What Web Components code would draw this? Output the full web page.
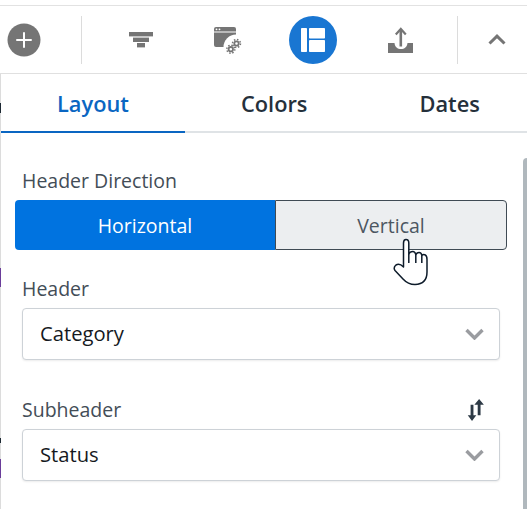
<!DOCTYPE html>
<html>
<head>
<meta charset="utf-8">
<style>
	html, body { margin: 0; padding: 0; background: #fff; }
	body { width: 527px; height: 509px; overflow: hidden; font-family: "Open Sans", "Noto Sans", sans-serif; position: relative; }
</style>
</head>
<body>
<tool-bar>
	<tool-icon width="82" offset="-17" divider>
		<svg width="34" height="34" viewBox="0 0 34 34"><circle cx="17" cy="17" r="16.5" fill="#757575"/><path d="M17 10v14M10 17h14" stroke="#fff" stroke-width="2" stroke-linecap="round"/></svg>
	</tool-icon>
	<tool-icon width="117" offset="0">
		<svg width="24" height="16" viewBox="0 0 24 16" fill="#757575"><rect width="24" height="4.4"/><rect x="4" y="5.6" width="16" height="4.4"/><rect x="8" y="11" width="8" height="4.4"/></svg>
	</tool-icon>
	<tool-icon width="66" offset="-3">
		<svg width="30" height="30" viewBox="214 26 30 30">
			<path d="M216 28h18a2 2 0 0 1 2 2v18h-20a2 2 0 0 1-2-2V30a2 2 0 0 1 2-2z" fill="#757575"/>
			<rect x="214" y="32.5" width="22" height="1" fill="#fff"/>
			<circle cx="216.5" cy="30.3" r=".9" fill="#fff"/><circle cx="219.5" cy="30.3" r=".9" fill="#fff"/>
			<circle cx="236" cy="48" r="12.5" fill="#fff"/>
			<g fill="none" stroke="#757575">
				<circle cx="236.5" cy="44.5" r="2.2" stroke-width="1.800"/>
				<circle cx="236.500" cy="44.500" r="4" stroke-width="1.500" stroke-dasharray="1.500 1.640"/>
				<circle cx="230.800" cy="50.200" r="2.200" stroke-width="1.800"/>
				<circle cx="230.800" cy="50.200" r="4" stroke-width="1.500" stroke-dasharray="1.500 1.640"/>
			</g>
		</svg>
	</tool-icon>
	<tool-icon width="96" offset="0">
		<svg width="48" height="48" viewBox="0 0 48 48"><circle cx="24" cy="24" r="24" fill="#1976d2"/><g fill="#fff"><rect x="12" y="12" width="6" height="24" rx=".8"/><rect x="20" y="12" width="16" height="10.5" rx=".8"/><rect x="20" y="24" width="16" height="12" rx=".8"/></g></svg>
	</tool-icon>
	<tool-icon width="97" offset="-9" divider>
		<svg width="26" height="26" viewBox="0 0 26 26">
			<path d="M0 16h6.500c.5 4 3 6 6.500 6s6-2 6.500-6H25v10H0z" fill="#757575"/>
			<path d="M12.800 19.500V3" stroke="#757575" stroke-width="2.600" fill="none"/>
			<path d="M7.800 7.500 12.800 2l5 5.500" stroke="#757575" stroke-width="2.200" fill="none"/>
		</svg>
	</tool-icon>
	<tool-icon width="69" offset="4">
		<svg width="18" height="11" viewBox="0 0 18 11"><path d="M1.500 9.500 9 2.200l7.500 7.300" stroke="#757575" stroke-width="3" fill="none"/></svg>
	</tool-icon>
</tool-bar>
<config-panel>
	<tab-bar active="0">
		<span>Layout</span>
		<span>Colors</span>
		<span>Dates</span>
	</tab-bar>
	<field-label style="margin-top:36px">Header Direction</field-label>
	<segment-toggle first="Horizontal" second="Vertical"></segment-toggle>
	<field-label style="margin-top:27px">Header</field-label>
	<select-box>Category</select-box>
	<field-label style="margin-top:38px">Subheader
		<svg slot="action" width="18" height="24" viewBox="466 397 19 25" fill="#2d3a46"><path d="M469.800 404h3v11h3l-4.500 6-4.500-6h3z"/><path d="M477.300 415h3v-11h3.500l-5-6-5 6h3.500z"/></svg>
	</field-label>
	<select-box>Status</select-box>
</config-panel>
<hand-cursor></hand-cursor>
<script>
class ToolBar extends HTMLElement {
	constructor() {
		super();
		this.attachShadow({ mode: "open" });
		this.shadowRoot.innerHTML = `
		<style>
			:host {
				display: flex;
				box-sizing: border-box;
				height: 69px;
				margin-top: 5px;
				border-top: 1px solid #e2e2e2;
				border-bottom: 1px solid #e0e0e0;
				background: #fff;
				align-items: stretch;
			}
		</style>
		<slot></slot>
		`;
	}
}

class ToolIcon extends HTMLElement {
	constructor() {
		super();
		this.attachShadow({ mode: "open" });
		this.shadowRoot.innerHTML = `
		<style>
			:host {
				display: flex;
				box-sizing: border-box;
				align-items: center;
				justify-content: center;
				position: relative;
			}
			.divider {
				position: absolute;
				right: 0;
				top: 10px;
				bottom: 9px;
				width: 1px;
				background: #dcdcdc;
			}
			.icon { display: flex; }
		</style>
		<div class="icon"><slot></slot></div>
		<div class="divider"></div>
		`;
	}

	connectedCallback() {
		this.style.width = `${this.getAttribute("width")}px`;
		const offset = Number(this.getAttribute("offset") || 0);
		this.shadowRoot.querySelector(".icon").style.transform = `translateX(${offset}px)`;
		if (!this.hasAttribute("divider")) {
			this.shadowRoot.querySelector(".divider").style.display = "none";
		}
	}
}

class ConfigPanel extends HTMLElement {
	constructor() {
		super();
		this.attachShadow({ mode: "open" });
		this.shadowRoot.innerHTML = `
		<style>
			:host {
				display: block;
				box-sizing: border-box;
				height: 435px;
				padding-left: 1px;
				position: relative;
				overflow: hidden;
				background:
					linear-gradient(#1d2933, #1d2933) 0 29px / 1px 10px no-repeat,
					linear-gradient(#6a3d9a, #6a3d9a) 0 194px / 1px 19px no-repeat,
					linear-gradient(#1d2933, #1d2933) 0 364px / 1px 5px no-repeat,
					linear-gradient(#6a3d9a, #6a3d9a) 0 385px / 1px 19px no-repeat,
					linear-gradient(#dcdcdc, #dcdcdc) 0 0 / 1px 100% no-repeat,
					#fff;
			}
			.form {
				display: flex;
				flex-direction: column;
				padding: 0 27px 0 21px;
			}
			.scrollbar {
				position: absolute;
				right: 0;
				top: 84px;
				bottom: 0;
				width: 4px;
				border-radius: 4px 0 0 0;
				background: #b0b8bd;
			}
		</style>
		<slot name="tabs"></slot>
		<div class="form"><slot></slot></div>
		<div class="scrollbar"></div>
		`;
	}

	connectedCallback() {
		const tabs = this.querySelector("tab-bar");
		if (tabs) tabs.slot = "tabs";
	}
}

class TabBar extends HTMLElement {
	constructor() {
		super();
		this.attachShadow({ mode: "open" });
		this.shadowRoot.innerHTML = `
		<style>
			:host {
				display: flex;
				height: 59px;
				box-sizing: border-box;
				border-bottom: 2px solid #dfe3e6;
				font-size: 21.800px;
				font-weight: 600;
				color: #25303b;
				white-space: nowrap;
			}
			::slotted(span) {
				box-sizing: border-box;
				height: 59px;
				padding: 13px 56px 0;
				line-height: 34px;
			}
			::slotted(span.active) {
				color: #0a66c2;
				border-bottom: 2px solid #0a66c2;
			}
		</style>
		<slot></slot>
		`;
	}

	connectedCallback() {
		const index = Number(this.getAttribute("active") || 0);
		this.querySelectorAll("span")[index].classList.add("active");
	}
}

class FieldLabel extends HTMLElement {
	constructor() {
		super();
		this.attachShadow({ mode: "open" });
		this.shadowRoot.innerHTML = `
		<style>
			:host {
				display: flex;
				justify-content: space-between;
				align-items: center;
				height: 24px;
				margin-bottom: 7px;
				font-size: 19.500px;
				line-height: 24px;
				color: #434d57;
			}
			.action { display: flex; margin-right: 15px; }
		</style>
		<span><slot></slot></span>
		<span class="action"><slot name="action"></slot></span>
		`;
	}
}

class SegmentToggle extends HTMLElement {
	constructor() {
		super();
		this.attachShadow({ mode: "open" });
		this.shadowRoot.innerHTML = `
		<style>
			:host {
				display: flex;
				height: 50px;
				margin: 0 -7px;
				font-size: 19.500px;
			}
			div {
				box-sizing: border-box;
				display: flex;
				align-items: center;
				justify-content: center;
			}
			.on {
				width: 260px;
				background: #0073e0;
				color: #fff;
				border-radius: 4px 0 0 4px;
			}
			.off {
				flex: 1;
				background: #eceef0;
				color: #4c5661;
				border: 1px solid #3f4a54;
				border-radius: 0 4px 4px 0;
			}
		</style>
		<div class="on"></div>
		<div class="off"></div>
		`;
	}

	connectedCallback() {
		this.shadowRoot.querySelector(".on").textContent = this.getAttribute("first");
		this.shadowRoot.querySelector(".off").textContent = this.getAttribute("second");
	}
}

class SelectBox extends HTMLElement {
	constructor() {
		super();
		this.attachShadow({ mode: "open" });
		this.shadowRoot.innerHTML = `
		<style>
			:host {
				display: flex;
				box-sizing: border-box;
				align-items: center;
				justify-content: space-between;
				height: 52px;
				padding: 0 15px 0 17px;
				background: #fff;
				border: 1px solid #cdd2d7;
				border-radius: 4px;
				box-shadow: 0 1px 2px rgba(0,0,0,.08);
				font-size: 20.200px;
				color: #15191e;
			}
			span { position: relative; top: -1px; }
			svg { display: block; }
		</style>
		<span><slot></slot></span>
		<svg width="19" height="12" viewBox="0 0 19 12"><path d="M1.500 2 9.500 10l8-8" stroke="#9a9ca0" stroke-width="3.400" fill="none"/></svg>
		`;
	}
}

class HandCursor extends HTMLElement {
	constructor() {
		super();
		this.attachShadow({ mode: "open" });
		this.shadowRoot.innerHTML = `
		<style>
			:host {
				position: absolute;
				left: 390px;
				top: 235px;
				width: 42px;
				height: 54px;
				pointer-events: none;
			}
		</style>
		<svg width="42" height="54" viewBox="390 235 42 54">
			<path d="M403.500 267V243Q403.500 239.500 406 239.500Q408.800 239.500 408.800 243V254Q410 251.500 412.800 251.500Q415 251.500 415.800 254.500Q417 252.500 419 252.500Q421.500 252.500 421.800 255.500Q423.500 254 425.300 255Q427 256 427 259.500V272Q427 284 415 284.500Q408 284.500 403 279L395 270.500Q393 267.500 396 265Q399.500 263 403.500 267Z" fill="#fff" stroke="#0d1b2a" stroke-width="1.500" stroke-linejoin="round"/>
			<path d="M408.800 254V263M415.800 254.500V263M421.800 255.500V263" stroke="#0d1b2a" stroke-width="1.500" fill="none"/>
		</svg>
		`;
	}
}

customElements.define("tool-bar", ToolBar);
customElements.define("tool-icon", ToolIcon);
customElements.define("config-panel", ConfigPanel);
customElements.define("tab-bar", TabBar);
customElements.define("field-label", FieldLabel);
customElements.define("segment-toggle", SegmentToggle);
customElements.define("select-box", SelectBox);
customElements.define("hand-cursor", HandCursor);
</script>
</body>
</html>
